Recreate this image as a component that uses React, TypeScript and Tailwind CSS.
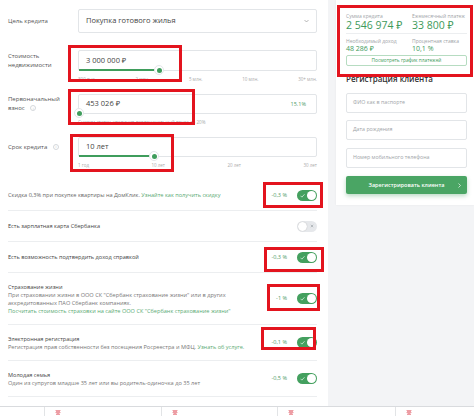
import React from "react";

function Toggle({ on }: { on: boolean }) {
  if (on) {
    return (
      <div className="relative w-[20px] h-[11px] rounded-full bg-[#44a05f] shrink-0">
        <svg className="absolute left-[3px] top-[3px]" width="5" height="5" viewBox="0 0 10 10">
          <path d="M1 5.5l2.8 2.8L9 2.5" stroke="#d6efdd" strokeWidth="1.6" fill="none" />
        </svg>
        <div className="absolute right-[1px] top-[1px] w-[9px] h-[9px] rounded-full bg-white" />
      </div>
    );
  }
  return (
    <div className="relative w-[20px] h-[11px] rounded-full bg-[#e6e8eb] shrink-0">
      <div className="absolute left-[1px] top-[1px] w-[9px] h-[9px] rounded-full bg-white shadow-[0_0_1px_rgba(0,0,0,0.3)]" />
      <svg className="absolute right-[3px] top-[3.5px]" width="4" height="4" viewBox="0 0 10 10">
        <path d="M2 2l6 6M8 2l-6 6" stroke="#9aa0a6" strokeWidth="1.6" />
      </svg>
    </div>
  );
}

function Info() {
  return (
    <span className="inline-flex items-center justify-center w-[6px] h-[6px] rounded-full border border-[#d5d8dc] text-[3.5px] text-[#b5b9bd] ml-[4px] align-middle leading-none">
      i
    </span>
  );
}

function Thumb({ left }: { left: number }) {
  return (
    <div
      className="absolute bottom-[-5px] w-[10px] h-[10px] rounded-full bg-white border border-[#e3e6e9] flex items-center justify-center"
      style={{ left: left - 5 }}
    >
      <div className="w-[5px] h-[5px] rounded-full bg-[#3f9d5c]" />
    </div>
  );
}

function Pct({ v }: { v: string }) {
  return <span className="text-[5.5px] text-[#4e9a66] mr-[10px] whitespace-nowrap">{v}</span>;
}

function Red({ c }: { c: string }) {
  return <div className={`absolute border-[3px] border-[#e3141e] pointer-events-none ${c}`} />;
}

function Stamp() {
  return (
    <svg width="6" height="5" viewBox="0 0 12 10" className="ml-[10px] mt-[3px]">
      <path d="M1 1h10M2 3h8M1 5h10M3 7h6M2 9h8" stroke="#e05a66" strokeWidth="1.2" />
    </svg>
  );
}

export default function App() {
  return (
    <div
      className="relative w-[474px] h-[416px] overflow-hidden bg-white flex flex-col"
      style={{ fontFamily: '"Open Sans", "Noto Sans", sans-serif' }}
    >
      <div className="flex h-[406px]">
        {/* Left panel */}
        <div className="w-[328px] bg-white flex flex-col pl-[8px] pr-[11px] pt-[9px]">
          {/* Row 1 */}
          <div className="flex items-center">
            <div className="w-[70px] text-[6px] text-[#555]">Цель кредита</div>
            <div className="flex-1 h-[24px] border border-[#e2e5e8] rounded-[2px] flex items-center justify-between px-[7px]">
              <span className="text-[7.5px] text-[#444]">Покупка готового жилья</span>
              <svg width="5" height="4" viewBox="0 0 10 6">
                <path d="M1 1l4 4 4-4" stroke="#888" strokeWidth="1.2" fill="none" />
              </svg>
            </div>
          </div>

          {/* Row 2 */}
          <div className="flex items-center mt-[17px]">
            <div className="w-[70px] text-[6px] leading-[9px] text-[#555]">
              Стоимость
              <br />
              недвижимости
            </div>
            <div className="relative flex-1 h-[21px] border border-[#e2e5e8] rounded-[2px] flex items-center px-[7px]">
              <span className="text-[7.5px] text-[#444]">3 000 000 ₽</span>
              <div className="absolute left-0 bottom-[-1px] h-[2px] w-[80px] bg-[#3f9d5c]" />
              <Thumb left={80} />
            </div>
          </div>
          <div className="ml-[70px] mt-[5px] h-[6px] flex justify-between items-center text-[4.5px] text-[#aaa]">
            <span>300 тыс.</span>
            <span>2 млн.</span>
            <span>5 млн.</span>
            <span>10 млн.</span>
            <span>30+ млн.</span>
          </div>

          {/* Row 3 */}
          <div className="flex items-center mt-[12px]">
            <div className="w-[70px] text-[6px] leading-[9px] text-[#555]">
              Первоначальный
              <br />
              взнос <Info />
            </div>
            <div className="relative flex-1 h-[20px] border border-[#e2e5e8] rounded-[2px] flex items-center justify-between pl-[7px] pr-[10px]">
              <span className="text-[7.5px] text-[#444]">453 026 ₽</span>
              <span className="text-[5.5px] text-[#4e9a66]">15.1%</span>
              <Thumb left={0} />
            </div>
          </div>
          <div className="ml-[70px] mt-[5px] h-[6px] flex items-center text-[4.6px] text-[#aaa]">
            Снизим ставку, увеличив первоначальный взнос до 20%
          </div>

          {/* Row 4 */}
          <div className="flex items-center mt-[12px]">
            <div className="w-[70px] text-[6px] text-[#555]">
              Срок кредита <Info />
            </div>
            <div className="relative flex-1 h-[20px] border border-[#e2e5e8] rounded-[2px] flex items-center px-[7px]">
              <span className="text-[7.5px] text-[#444]">10 лет</span>
              <div className="absolute left-0 bottom-[-1px] h-[2px] w-[75px] bg-[#3f9d5c]" />
              <Thumb left={75} />
            </div>
          </div>
          <div className="ml-[70px] mt-[5px] h-[6px] flex justify-between items-center text-[4.5px] text-[#aaa]">
            <span>1 год</span>
            <span>10 лет</span>
            <span>20 лет</span>
            <span>30 лет</span>
          </div>

          {/* Option rows */}
          <div className="mt-[12px] flex flex-col">
            <div className="h-[31px] flex items-center border-b border-[#eceef0]">
              <div className="flex-1 text-[5.6px] text-[#666]">
                Скидка 0,3% при покупке квартиры на ДомКлик.{" "}
                <span className="text-[#5aaa73]">Узнайте как получить скидку</span>
              </div>
              <Pct v="-0,3 %" />
              <Toggle on />
            </div>
            <div className="h-[31px] flex items-center border-b border-[#eceef0]">
              <div className="flex-1 text-[5.6px] text-[#444]">Есть зарплатная карта Сбербанка</div>
              <Toggle on={false} />
            </div>
            <div className="h-[31px] flex items-center border-b border-[#eceef0]">
              <div className="flex-1 text-[5.6px] text-[#444]">Есть возможность подтвердить доход справкой</div>
              <Pct v="-0,3 %" />
              <Toggle on />
            </div>
            <div className="h-[52px] flex items-center border-b border-[#eceef0]">
              <div className="flex-1 text-[5.6px] leading-[8px] text-[#777]">
                <div className="text-[#444]">Страхование жизни</div>
                <div>При страховании жизни в ООО СК "Сбербанк страхование жизни" или в других</div>
                <div>аккредитованных ПАО Сбербанк компаниях.</div>
                <div className="text-[#5aaa73]">
                  Посчитать стоимость страховки на сайте ООО СК "Сбербанк страхование жизни"
                </div>
              </div>
              <Pct v="-1 %" />
              <Toggle on />
            </div>
            <div className="h-[36px] flex items-center border-b border-[#eceef0]">
              <div className="flex-1 text-[5.6px] leading-[8px] text-[#777]">
                <div className="text-[#444]">Электронная регистрация</div>
                <div>
                  Регистрация прав собственности без посещения Росреестра и МФЦ.{" "}
                  <span className="text-[#5aaa73]">Узнать об услуге.</span>
                </div>
              </div>
              <Pct v="-0,1 %" />
              <Toggle on />
            </div>
            <div className="h-[36px] flex items-center border-b border-[#eceef0]">
              <div className="flex-1 text-[5.6px] leading-[8px] text-[#777]">
                <div className="text-[#444]">Молодая семья</div>
                <div>Один из супругов младше 35 лет или вы родитель-одиночка до 35 лет</div>
              </div>
              <Pct v="-0,5 %" />
              <Toggle on />
            </div>
          </div>
        </div>

        {/* Right panel */}
        <div className="flex-1 bg-[#f3f4f6] pl-[8px]">
          <div className="bg-white pt-[13px] pl-[10px] pr-[7px] pb-[11px] shadow-[0_0_2px_rgba(0,0,0,0.06)]">
            <div className="grid grid-cols-[66px_1fr]">
              <div className="text-[5px] leading-[6px] text-[#a0a4a8]">Сумма кредита</div>
              <div className="text-[5px] leading-[6px] text-[#a0a4a8]">Ежемесячный платеж</div>
              <div className="text-[10.5px] leading-[13px] text-[#3d9a5a]">2 546 974 ₽</div>
              <div className="text-[10.5px] leading-[13px] text-[#3d9a5a]">33 800 ₽</div>
            </div>
            <div className="mt-[1px] border-b border-[#eceef0]" />
            <div className="grid grid-cols-[66px_1fr] mt-[4px]">
              <div className="text-[5px] leading-[6px] text-[#a0a4a8]">Необходимый доход</div>
              <div className="text-[5px] leading-[6px] text-[#a0a4a8]">Процентная ставка</div>
              <div className="text-[7px] leading-[9px] text-[#3d9a5a]">48 286 ₽</div>
              <div className="text-[7px] leading-[9px] text-[#3d9a5a]">10,1 %</div>
            </div>
            <div className="mt-[2px] h-[11px] border border-[#b6dcc1] rounded-[2px] flex items-center justify-center text-[4.8px] text-[#3d9a5a]">
              Посмотреть график платежей
            </div>
            <div className="mt-[8px] text-[8px] leading-[10px] font-semibold text-[#333]">Регистрация клиента</div>
            <div className="mt-[9px] h-[20px] border border-[#e2e5e8] rounded-[2px] flex items-center px-[6px] text-[5.3px] text-[#a0a4a8]">
              ФИО как в паспорте
            </div>
            <div className="mt-[7px] h-[20px] border border-[#e2e5e8] rounded-[2px] flex items-center px-[6px] text-[5.3px] text-[#a0a4a8]">
              Дата рождения
            </div>
            <div className="mt-[8px] h-[20px] border border-[#e2e5e8] rounded-[2px] flex items-center px-[6px] text-[5.3px] text-[#a0a4a8]">
              Номер мобильного телефона
            </div>
            <div className="relative mt-[8px] h-[18px] rounded-[2px] bg-[#4aa564] shadow-[0_2px_4px_rgba(60,150,90,0.35)] flex items-center justify-center text-[5.5px] font-semibold text-white">
              Зарегистрировать клиента
              <svg className="absolute right-[6px] top-[7px]" width="3" height="5" viewBox="0 0 6 10">
                <path d="M1 1l4 4-4 4" stroke="#fff" strokeWidth="1.3" fill="none" />
              </svg>
            </div>
          </div>
        </div>
      </div>

      {/* Bottom strip */}
      <div className="h-[10px] border-t border-[#d9dbde] bg-white flex">
        <div className="w-[45px] border-r border-[#e2e4e6]" />
        <div className="w-[117px] border-r border-[#e2e4e6] flex">
          <Stamp />
        </div>
        <div className="w-[116px] border-r border-[#e2e4e6] flex">
          <Stamp />
        </div>
        <div className="w-[118px] border-r border-[#e2e4e6] flex">
          <Stamp />
        </div>
        <div className="flex-1 flex">
          <Stamp />
        </div>
      </div>

      {/* Red annotation boxes */}
      <Red c="left-[68px] top-[45px] w-[114px] h-[37px]" />
      <Red c="left-[68px] top-[89px] w-[127px] h-[36px]" />
      <Red c="left-[70px] top-[134px] w-[104px] h-[38px]" />
      <Red c="left-[263px] top-[182px] w-[60px] h-[26px]" />
      <Red c="left-[264px] top-[247px] w-[60px] h-[25px]" />
      <Red c="left-[267px] top-[284px] w-[53px] h-[27px]" />
      <Red c="left-[261px] top-[327px] w-[55px] h-[23px]" />
      <Red c="left-[337px] top-[5px] w-[136px] h-[72px]" />
    </div>
  );
}
